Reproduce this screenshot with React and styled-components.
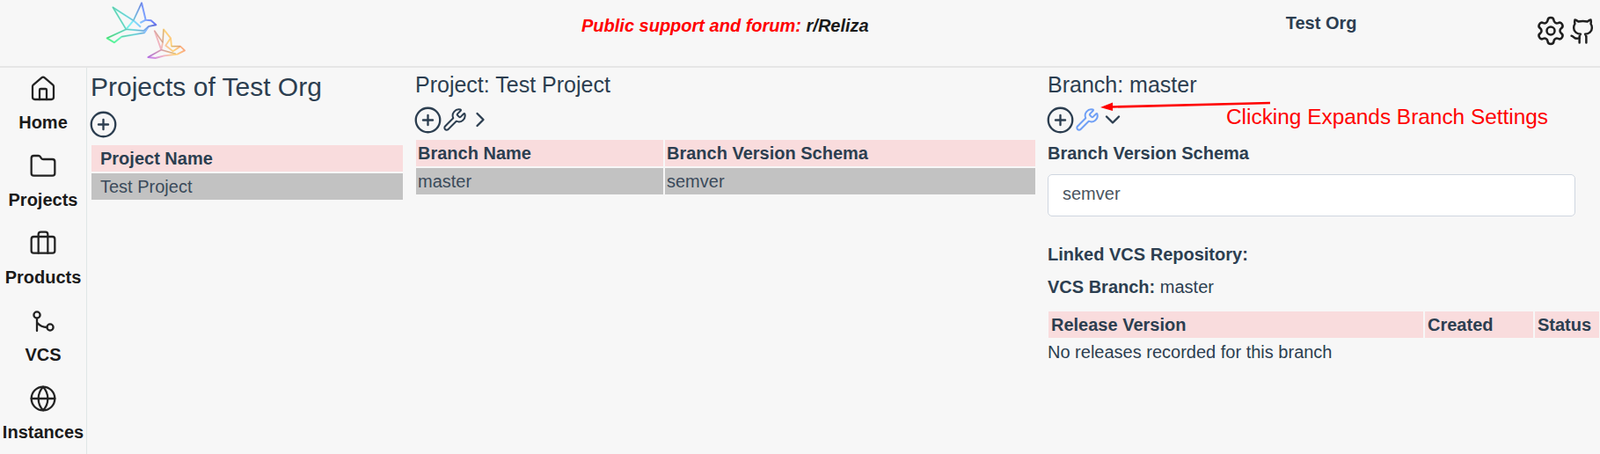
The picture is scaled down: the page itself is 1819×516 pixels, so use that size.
import React from 'react';
import styled, { createGlobalStyle } from 'styled-components';
import {
  House,
  Folder,
  Briefcase,
  Globe,
  Settings,
  Github,
  CirclePlus,
  Wrench,
  ChevronRight,
  ChevronDown,
} from 'lucide-react';

const GlobalStyle = createGlobalStyle`
  html, body {
    margin: 0;
    height: 100%;
    overflow: hidden;
    background: #f7f7f7;
    font-family: "Liberation Sans", Arial, sans-serif;
    font-size: 20px;
    color: #2c3e50;
  }
`;

const Page = styled.div`
  width: 1819px;
  height: 516px;
  overflow: hidden;
`;

const Header = styled.header`
  display: flex;
  height: 75px;
  padding-left: 120px;
  border-bottom: 2px solid #e6e6e6;
`;

const LogoBox = styled.div`
  width: 94px;
  height: 70px;
`;

const Support = styled.div`
  margin: 18px 0 0 447px;
  line-height: 23px;
  font-weight: bold;
  font-style: italic;
  color: #ff0000;
`;

const SupportLink = styled.span`
  color: #1a1a1a;
`;

const OrgName = styled.div`
  margin: 15px 0 0 474px;
  line-height: 23px;
  font-weight: bold;
`;

const HeaderIcons = styled.div`
  display: flex;
  align-items: center;
  gap: 3px;
  height: 36px;
  margin: 17px 0 0 203px;
  color: #1f1f1f;
`;

const Main = styled.div`
  display: flex;
  height: 439px;
`;

const Sidebar = styled.nav`
  flex: none;
  display: flex;
  flex-direction: column;
  width: 98px;
  padding-top: 8px;
  border-right: 1px solid #dfe6e6;
  overflow: hidden;
`;

const NavItem = styled.a`
  flex: none;
  display: flex;
  flex-direction: column;
  align-items: center;
  height: 88px;
  color: #1a1a1a;
  font-weight: bold;
  line-height: 23px;
`;

const NavIcon = styled.span`
  display: flex;
  height: 32px;
  margin-bottom: 11px;
  align-items: center;
  color: #222;
`;

const Columns = styled.div`
  display: grid;
  grid-template-columns: 356px 706px 628px;
  column-gap: 13px;
  padding-left: 4px;
`;

const Panel = styled.section`
  position: relative;
  min-width: 0;
`;

const PageTitle = styled.h1`
  margin: 0;
  padding-top: 2px;
  font-size: 30px;
  line-height: 40px;
  font-weight: normal;
`;

const SubTitle = styled.h2`
  margin: 0;
  padding-top: 3px;
  font-size: 25px;
  line-height: 32px;
  font-weight: normal;
`;

const IconRow = styled.div`
  display: flex;
  align-items: center;
  height: 28px;
  margin: ${(p) => p.$top || 10}px 0 ${(p) => p.$bottom || 8}px -2px;
`;

const Chevron = styled.span`
  display: flex;
  margin-left: ${(p) => p.$left}px;
`;

const Table = styled.table`
  width: ${(p) => p.$width}px;
  margin-top: ${(p) => p.$top || 0}px;
  margin-left: -1px;
  table-layout: fixed;
  border-collapse: separate;
  border-spacing: 2px;
`;

const Th = styled.th`
  height: 30px;
  padding: 0 0 0 ${(p) => p.$pad || 3}px;
  background: #f9dcdd;
  text-align: left;
  font-weight: bold;
  line-height: 23px;
  box-sizing: border-box;
`;

const Td = styled.td`
  height: 30px;
  padding: 0 0 0 ${(p) => p.$pad || 3}px;
  background: #c2c2c2;
  line-height: 23px;
  color: #3a4a5a;
  box-sizing: border-box;
`;

const FieldLabel = styled.div`
  margin-top: ${(p) => p.$top || 0}px;
  line-height: 23px;
  font-weight: bold;
`;

const FieldValue = styled.span`
  font-weight: normal;
`;

const TextInput = styled.input`
  display: block;
  width: 600px;
  height: 48px;
  margin-top: 12px;
  padding: 0 16px 3px;
  box-sizing: border-box;
  border: 1px solid #cfd6e0;
  border-radius: 5px;
  background: #fff;
  font: inherit;
  color: #4a5560;
  outline: none;
`;

const EmptyNote = styled.div`
  margin: 3px 0 0 0;
  line-height: 23px;
`;

const Annotation = styled.div`
  position: absolute;
  top: 43px;
  left: 203px;
  white-space: nowrap;
  font-size: 24.4px;
  line-height: 26px;
  color: #ff0000;
`;

const ArrowSvg = styled.svg`
  position: absolute;
  top: 36px;
  left: 60px;
`;

function Logo() {
  return (
    <LogoBox>
      <svg width="94" height="70" viewBox="360 0 282 210" fill="none" strokeLinejoin="round">
        <defs>
          <linearGradient id="birdA" gradientUnits="userSpaceOnUse" x1="365" y1="130" x2="535" y2="60">
            <stop offset="0" stopColor="#55f58a" />
            <stop offset="0.5" stopColor="#7ff0f5" />
            <stop offset="0.75" stopColor="#86b4ff" />
            <stop offset="1" stopColor="#5d5cf0" />
          </linearGradient>
          <linearGradient id="birdB" gradientUnits="userSpaceOnUse" x1="505" y1="195" x2="630" y2="140">
            <stop offset="0" stopColor="#c178ee" />
            <stop offset="0.35" stopColor="#eeb0c8" />
            <stop offset="0.65" stopColor="#ffd47c" />
            <stop offset="1" stopColor="#f89880" />
          </linearGradient>
        </defs>
        <g stroke="url(#birdA)" strokeWidth="6">
          <path d="M385 25 L455 70 L483 10 L497 68 L515 70 L532 85 L507 90 L492 112 L415 125 L390 145 L365 130 L430 100 Z" />
          <path d="M455 70 L430 100 L490 105 L507 90 M455 70 L480 92 M497 68 L478 78" />
        </g>
        <g stroke="#555" strokeWidth="1.2" opacity="0.75">
          <path d="M385 25 L455 70 L483 10 M385 25 L430 100 L365 130 M415 125 L492 112 M430 100 L490 105 L507 90 L532 85" />
        </g>
        <g stroke="url(#birdB)" strokeWidth="5.5">
          <path d="M527 105 L555 145 L558 100 L582 130 L585 158 L615 158 L630 172 L605 185 L560 190 L530 198 L505 195 L550 170 Z" />
          <path d="M555 145 L550 170 L600 185 M582 130 L565 155 L590 175 L615 158" />
        </g>
        <g stroke="#555" strokeWidth="1.1" opacity="0.7">
          <path d="M527 105 L555 145 L558 100 M550 170 L600 183 M505 195 L550 170 M585 158 L615 158" />
        </g>
      </svg>
    </LogoBox>
  );
}

function VcsIcon() {
  return (
    <svg width="30" height="30" viewBox="0 0 30 30" fill="none" stroke="currentColor" strokeWidth="2.3" strokeLinecap="round">
      <circle cx="8" cy="8" r="3.6" />
      <circle cx="23" cy="22" r="3.6" />
      <path d="M8 11.6 V26 M8.5 17 C11 20 14.5 22 19.4 22" />
    </svg>
  );
}

const navItems = [
  { label: 'Home', icon: <House size={32} strokeWidth={1.7} /> },
  { label: 'Projects', icon: <Folder size={32} strokeWidth={1.7} /> },
  { label: 'Products', icon: <Briefcase size={32} strokeWidth={1.7} /> },
  { label: 'VCS', icon: <VcsIcon /> },
  { label: 'Instances', icon: <Globe size={32} strokeWidth={1.7} /> },
];

function PlusIcon() {
  return <CirclePlus size={33} strokeWidth={1.7} />;
}

export default function App() {
  return (
    <Page>
      <GlobalStyle />
      <Header>
        <Logo />
        <Support>
          Public support and forum: <SupportLink>r/Reliza</SupportLink>
        </Support>
        <OrgName>Test Org</OrgName>
        <HeaderIcons>
          <Settings size={36} strokeWidth={1.7} />
          <Github size={31} strokeWidth={1.9} />
        </HeaderIcons>
      </Header>
      <Main>
        <Sidebar>
          {navItems.map(({ label, icon }) => (
            <NavItem key={label}>
              <NavIcon>{icon}</NavIcon>
              {label}
            </NavItem>
          ))}
        </Sidebar>
        <Columns>
          <Panel>
            <PageTitle>Projects of Test Org</PageTitle>
            <IconRow $top={8} $bottom={8}>
              <PlusIcon />
            </IconRow>
            <Table $width={358}>
              <thead>
                <tr>
                  <Th $pad={10}>Project Name</Th>
                </tr>
              </thead>
              <tbody>
                <tr>
                  <Td $pad={10}>Test Project</Td>
                </tr>
              </tbody>
            </Table>
          </Panel>
          <Panel>
            <SubTitle>Project: Test Project</SubTitle>
            <IconRow $bottom={7}>
              <PlusIcon />
              <Wrench size={28} strokeWidth={1.7} />
              <Chevron $left={1}>
                <ChevronRight size={28} strokeWidth={2} />
              </Chevron>
            </IconRow>
            <Table $width={708}>
              <colgroup>
                <col width="281" />
                <col />
              </colgroup>
              <thead>
                <tr>
                  <Th $pad={2}>Branch Name</Th>
                  <Th $pad={2}>Branch Version Schema</Th>
                </tr>
              </thead>
              <tbody>
                <tr>
                  <Td $pad={2}>master</Td>
                  <Td $pad={2}>semver</Td>
                </tr>
              </tbody>
            </Table>
          </Panel>
          <Panel>
            <SubTitle>Branch: master</SubTitle>
            <IconRow>
              <PlusIcon />
              <Wrench size={28} strokeWidth={1.7} color="#6f9ff5" />
              <Chevron $left={1}>
                <ChevronDown size={28} strokeWidth={2} />
              </Chevron>
            </IconRow>
            <ArrowSvg width="200" height="14" viewBox="0 0 200 14">
              <path d="M193 4 L14 8.5" stroke="#ff0000" strokeWidth="2.6" />
              <path d="M0 9 L14 3.5 L14 13 Z" fill="#ff0000" />
            </ArrowSvg>
            <Annotation>Clicking Expands Branch Settings</Annotation>
            <FieldLabel $top={13}>Branch Version Schema</FieldLabel>
            <TextInput readOnly value="semver" />
            <FieldLabel $top={32}>Linked VCS Repository:</FieldLabel>
            <FieldLabel $top={14}>
              VCS Branch: <FieldValue>master</FieldValue>
            </FieldLabel>
            <Table $width={630} $top={14}>
              <colgroup>
                <col width="426" />
                <col width="123" />
                <col />
              </colgroup>
              <thead>
                <tr>
                  <Th>Release Version</Th>
                  <Th>Created</Th>
                  <Th>Status</Th>
                </tr>
              </thead>
            </Table>
            <EmptyNote>No releases recorded for this branch</EmptyNote>
          </Panel>
        </Columns>
      </Main>
    </Page>
  );
}
